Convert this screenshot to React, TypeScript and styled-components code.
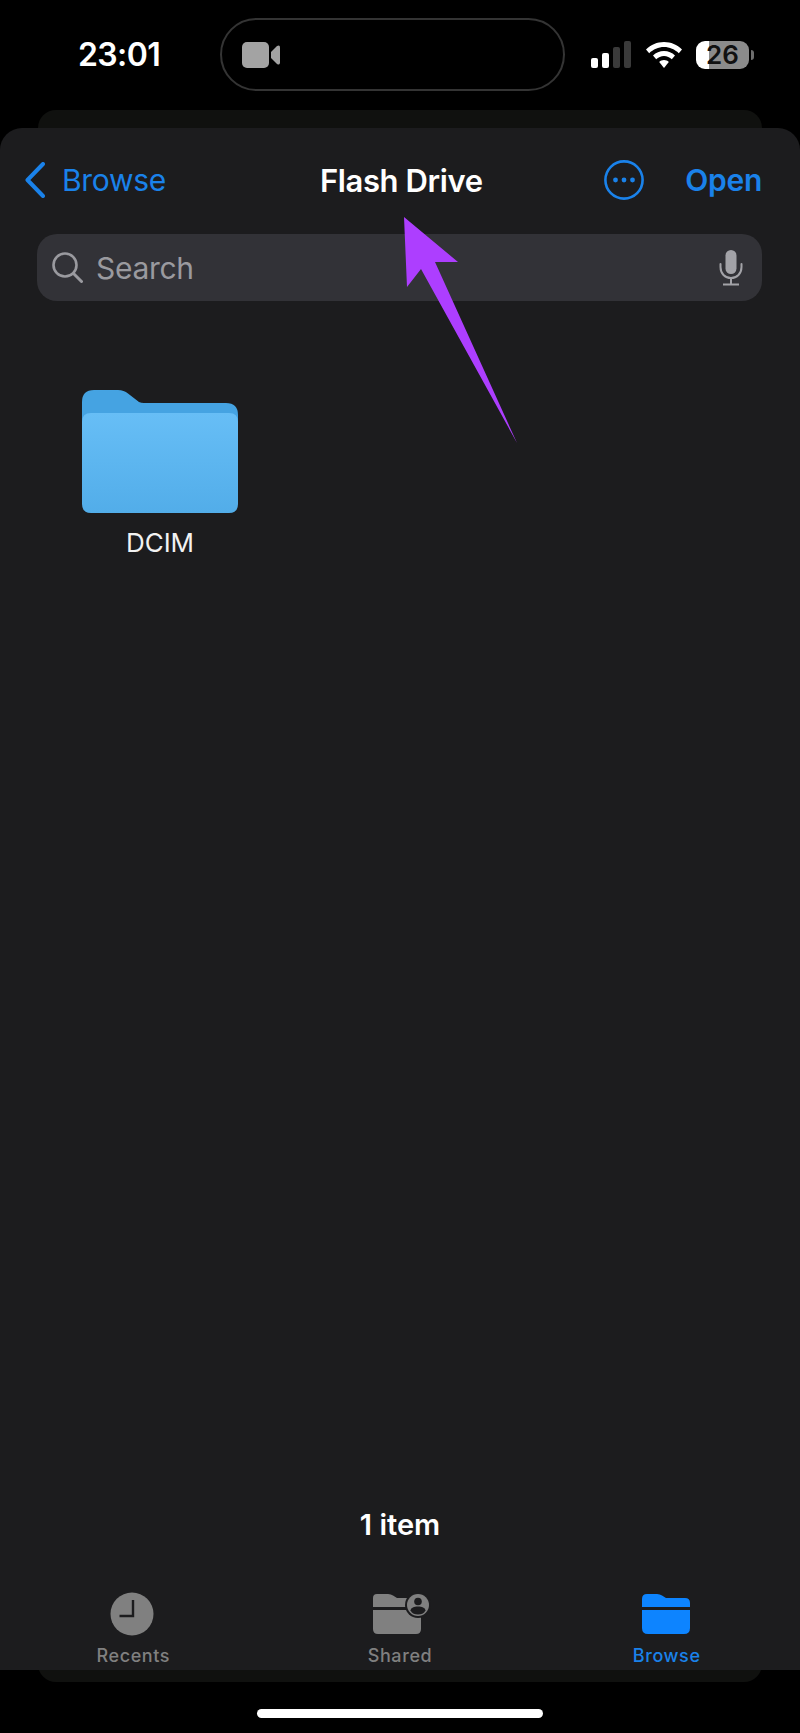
import * as React from 'react';
import styled, { createGlobalStyle } from 'styled-components';

const BLUE = '#1a82ea';
const UI_FONT = 'Inter, "Liberation Sans", sans-serif';

const GlobalStyle = createGlobalStyle`
  html, body {
    margin: 0;
    padding: 0;
    background: #000;
  }
  * {
    box-sizing: border-box;
  }
`;

const Page = styled.div`
  width: 800px;
  height: 1733px;
  background: #000;
  font-family: ${UI_FONT};
  position: relative;
  overflow: hidden;
  display: flex;
  flex-direction: column;
`;

const StatusBar = styled.div`
  height: 110px;
  padding: 18px 0 0 78px;
  display: flex;
  align-items: flex-start;
`;
const StatusRow = styled.div`
  height: 73px;
  display: flex;
  align-items: center;
`;
const Time = styled.div`
  width: 142px;
  color: #fff;
  font-size: 32px;
  font-weight: 600;
  letter-spacing: -0.6px;
`;
const Island = styled.div`
  width: 345px;
  height: 73px;
  margin-right: 26px;
  padding-left: 20px;
  border: 2px solid #343434;
  border-radius: 37px;
  display: flex;
  align-items: center;
`;
const StatusIcons = styled.div`
  display: flex;
  align-items: center;
`;
const Battery = styled.div<{ level: number }>`
  width: 53px;
  height: 28px;
  margin-left: 14px;
  border-radius: 9px;
  background: linear-gradient(
    to right,
    #fff ${props => props.level}px,
    #8b8b8b ${props => props.level}px
  );
  color: #111;
  font-size: 26px;
  font-weight: 600;
  line-height: 28px;
  text-align: center;
  position: relative;

  &::after {
    content: '';
    position: absolute;
    right: -5px;
    top: 9px;
    width: 3px;
    height: 10px;
    border-radius: 0 3px 3px 0;
    background: #6e6e6e;
  }
`;

const BackSheet = styled.div`
  height: 1572px;
  margin: 0 38px;
  padding-top: 18px;
  background: #10110f;
  border-radius: 18px;
`;
const Sheet = styled.div`
  height: 1542px;
  margin: 0 -38px;
  background: #1c1c1e;
  border-radius: 22px 22px 0 0;
  display: flex;
  flex-direction: column;
`;

const NavBar = styled.div`
  height: 106px;
  padding: 0 38px 2px 25px;
  display: grid;
  grid-template-columns: 295px auto 1fr;
  align-items: center;
`;
const BackLink = styled.div`
  display: flex;
  align-items: center;
  gap: 17px;
  color: ${BLUE};
  font-size: 30px;
  letter-spacing: -0.3px;
`;
const Title = styled.div`
  color: #fff;
  font-size: 31px;
  font-weight: 600;
  letter-spacing: -0.4px;
  white-space: nowrap;
`;
const NavActions = styled.div`
  display: flex;
  align-items: center;
  justify-content: flex-end;
  gap: 41px;
`;
const OpenLink = styled.div`
  color: ${BLUE};
  font-size: 30px;
  font-weight: 600;
  letter-spacing: -0.3px;
`;

const SearchField = styled.div`
  height: 67px;
  margin: 0 38px 0 37px;
  padding: 0 19px 0 15px;
  background: #323237;
  border-radius: 20px;
  display: flex;
  align-items: center;
  gap: 13px;
`;
const SearchText = styled.div`
  flex: 1;
  color: #9a9a9f;
  font-size: 30px;
  letter-spacing: -0.3px;
`;

const FileGrid = styled.div`
  flex: 1;
  padding: 89px 0 0 82px;
  display: flex;
  align-items: flex-start;
`;
const FileItem = styled.div`
  width: 156px;
  display: flex;
  flex-direction: column;
  align-items: center;
  gap: 13px;
`;
const FileName = styled.div`
  color: #f2f2f2;
  font-size: 26px;
  line-height: 34px;
`;

const ItemCount = styled.div`
  height: 36px;
  margin-bottom: 49px;
  color: #fff;
  font-size: 29px;
  font-weight: 600;
  line-height: 36px;
  text-align: center;
`;

const TabBar = styled.div`
  height: 78px;
  display: grid;
  grid-template-columns: repeat(3, 1fr);
`;
const Tab = styled.div<{ active?: boolean }>`
  display: flex;
  flex-direction: column;
  align-items: center;
  color: ${props => (props.active ? BLUE : '#808080')};
`;
const TabIcon = styled.div`
  height: 44px;
  display: flex;
  align-items: center;
`;
const TabLabel = styled.div`
  margin-top: 7px;
  font-size: 18px;
  line-height: 26px;
  font-weight: 500;
  letter-spacing: 0.6px;
`;

const HomeArea = styled.div`
  flex: 1;
  padding-top: 27px;
  display: flex;
  justify-content: center;
`;
const HomeBar = styled.div`
  width: 286px;
  height: 9px;
  border-radius: 5px;
  background: #fff;
`;

const PointerArrow = styled.svg`
  position: absolute;
  left: 400px;
  top: 212px;
`;

const CameraIcon = () => (
  <svg width="38" height="26" viewBox="0 0 38 26">
    <rect x="0" y="0" width="27" height="26" rx="5" fill="#a3a3a3" />
    <path d="M29 10 L35 4 Q38 2.5 38 5.5 V20.5 Q38 23.5 35 22 L29 16 Z" fill="#a3a3a3" />
  </svg>
);

const SignalIcon = () => (
  <svg width="41" height="27" viewBox="0 0 41 27">
    <rect x="0" y="17" width="7" height="10" rx="2" fill="#fff" />
    <rect x="11" y="12" width="7" height="15" rx="2" fill="#fff" />
    <rect x="22" y="6" width="7" height="21" rx="2" fill="#3a3a3a" />
    <rect x="33" y="0" width="7" height="27" rx="2" fill="#3a3a3a" />
  </svg>
);

const WifiIcon = () => (
  <svg width="36" height="26" viewBox="0 0 36 26" style={{ marginLeft: 14 }}>
    <path d="M18 0 C25 0 31 2.7 36 7.5 L32.8 11.2 C28.8 7.4 23.6 5 18 5 C12.4 5 7.2 7.4 3.2 11.2 L0 7.5 C5 2.7 11 0 18 0 Z" fill="#fff" />
    <path d="M18 9 C22.3 9 26 10.7 29 13.5 L25.8 17.2 C23.7 15.3 21 14 18 14 C15 14 12.3 15.3 10.2 17.2 L7 13.5 C10 10.7 13.7 9 18 9 Z" fill="#fff" />
    <path d="M18 18 C19.9 18 21.5 18.7 22.8 19.9 L18 26 L13.2 19.9 C14.5 18.7 16.1 18 18 18 Z" fill="#fff" />
  </svg>
);

const ChevronLeft = () => (
  <svg width="20" height="36" viewBox="0 0 20 36">
    <path d="M18 2 L2.5 18 L18 34" fill="none" stroke={BLUE} strokeWidth="4" strokeLinecap="round" strokeLinejoin="round" />
  </svg>
);

const MoreIcon = () => (
  <svg width="40" height="40" viewBox="0 0 40 40">
    <circle cx="20" cy="20" r="18.6" fill="none" stroke={BLUE} strokeWidth="2.6" />
    <circle cx="11.5" cy="20" r="2.4" fill={BLUE} />
    <circle cx="20" cy="20" r="2.4" fill={BLUE} />
    <circle cx="28.5" cy="20" r="2.4" fill={BLUE} />
  </svg>
);

const SearchIcon = () => (
  <svg width="31" height="31" viewBox="0 0 31 31">
    <circle cx="13" cy="13" r="11.5" fill="none" stroke="#9a9a9f" strokeWidth="2.6" />
    <path d="M21.5 21.5 L29.5 29.5" stroke="#9a9a9f" strokeWidth="3" strokeLinecap="round" />
  </svg>
);

const MicIcon = () => (
  <svg width="24" height="36" viewBox="0 0 24 36">
    <rect x="6.5" y="0" width="11" height="24" rx="5.5" fill="#a3a3a8" />
    <path d="M1.5 14 V17 C1.5 23.5 6 28 12 28 C18 28 22.5 23.5 22.5 17 V14" fill="none" stroke="#a3a3a8" strokeWidth="2" strokeLinecap="round" />
    <path d="M12 28 V34 M4 34.5 H20" stroke="#a3a3a8" strokeWidth="2" />
  </svg>
);

const LargeFolder = () => (
  <svg width="156" height="123" viewBox="0 0 156 123">
    <defs>
      <linearGradient id="folderFront" x1="0" y1="0" x2="0" y2="1">
        <stop offset="0" stopColor="#67bef6" />
        <stop offset="1" stopColor="#52ade9" />
      </linearGradient>
    </defs>
    <path d="M0 12 Q0 0 12 0 H36 Q42 0 46 3.5 L57 12 Q59 13 62 13 H144 Q156 13 156 25 V60 H0 Z" fill="#45a3e2" />
    <path d="M0 32 Q0 23 9 23 H147 Q156 23 156 32 V114 Q156 123 147 123 H9 Q0 123 0 114 Z" fill="url(#folderFront)" />
  </svg>
);

const ClockIcon = () => (
  <svg width="44" height="44" viewBox="0 0 44 44" style={{ marginLeft: -2 }}>
    <circle cx="22" cy="22" r="21.5" fill="#808080" />
    <path d="M23 8 V24 H9.5" fill="none" stroke="#1c1c1e" strokeWidth="2.4" />
  </svg>
);

const SharedIcon = () => (
  <svg width="58" height="42" viewBox="0 0 58 42" style={{ marginLeft: 5 }}>
    <path d="M0 5 Q0 1 4 1 H15 Q18 1 20 2.5 L24 5 H44 Q48 5 48 9 V14 H0 Z" fill="#808080" />
    <path d="M0 17 H48 V36 Q48 41 43 41 H5 Q0 41 0 36 Z" fill="#808080" />
    <circle cx="45" cy="12" r="13" fill="#1c1c1e" />
    <circle cx="45" cy="12" r="11" fill="#808080" />
    <circle cx="45" cy="8.5" r="3.8" fill="#1c1c1e" />
    <path d="M37.5 17.5 C38 14.5 41 13.5 45 13.5 C49 13.5 52 14.5 52.5 17.5 C51 20.5 48 21.5 45 21.5 C42 21.5 39 20.5 37.5 17.5 Z" fill="#1c1c1e" />
  </svg>
);

const BrowseIcon = () => (
  <svg width="48" height="40" viewBox="0 0 48 40" style={{ marginLeft: -2 }}>
    <path d="M0 5 Q0 0 5 0 H15 Q18 0 20 1.5 L24 4 H43 Q48 4 48 9 V13 H0 Z" fill="#0d84ff" />
    <path d="M0 16 H48 V34 Q48 40 42 40 H6 Q0 40 0 34 Z" fill="#0d84ff" />
  </svg>
);

export default function App() {
  return (
    <Page>
      <GlobalStyle />
      <StatusBar>
        <StatusRow>
          <Time>23:01</Time>
          <Island>
            <CameraIcon />
          </Island>
          <StatusIcons>
            <SignalIcon />
            <WifiIcon />
            <Battery level={13}>26</Battery>
          </StatusIcons>
        </StatusRow>
      </StatusBar>

      <BackSheet>
        <Sheet>
          <NavBar>
            <BackLink>
              <ChevronLeft />
              Browse
            </BackLink>
            <Title>Flash Drive</Title>
            <NavActions>
              <MoreIcon />
              <OpenLink>Open</OpenLink>
            </NavActions>
          </NavBar>
          <SearchField>
            <SearchIcon />
            <SearchText>Search</SearchText>
            <MicIcon />
          </SearchField>
          <FileGrid>
            <FileItem>
              <LargeFolder />
              <FileName>DCIM</FileName>
            </FileItem>
          </FileGrid>
          <ItemCount>1 item</ItemCount>
          <TabBar>
            <Tab>
              <TabIcon>
                <ClockIcon />
              </TabIcon>
              <TabLabel>Recents</TabLabel>
            </Tab>
            <Tab>
              <TabIcon>
                <SharedIcon />
              </TabIcon>
              <TabLabel>Shared</TabLabel>
            </Tab>
            <Tab active>
              <TabIcon>
                <BrowseIcon />
              </TabIcon>
              <TabLabel>Browse</TabLabel>
            </Tab>
          </TabBar>
        </Sheet>
      </BackSheet>

      <HomeArea>
        <HomeBar />
      </HomeArea>

      <PointerArrow width="122" height="236" viewBox="400 212 122 236">
        <path d="M404 217 L458 262 L435 262 L517 443 L421 269 L407 287 Z" fill="#ad3eff" />
      </PointerArrow>
    </Page>
  );
}
